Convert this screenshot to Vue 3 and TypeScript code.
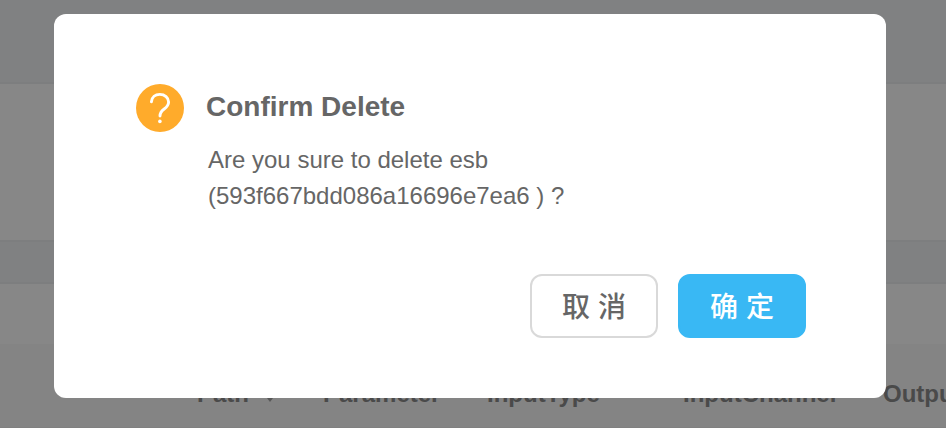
<script setup lang="ts">
interface Column {
  key: string
  label: string
  sortable?: boolean
}

const columns: Column[] = [
  { key: 'path', label: 'Path', sortable: true },
  { key: 'parameter', label: 'Parameter' },
  { key: 'input-type', label: 'InputType' },
  { key: 'input-channel', label: 'InputChannel' },
  { key: 'output', label: 'Output' },
]

const recordId = '593f667bdd086a16696e7ea6'
</script>

<template>
  <div class="screen">
    <main class="page">
      <div class="band band-top"></div>
      <div class="panel"></div>
      <div class="band band-gap"></div>
      <div class="toolbar"></div>
      <div class="table-wrap">
        <table class="table">
          <thead>
            <tr>
              <th v-for="column in columns" :key="column.key" :class="column.key">
                {{ column.label }}
                <svg v-if="column.sortable" class="caret" viewBox="0 0 12 8" aria-hidden="true">
                  <path d="M0 0h12L6 8z" />
                </svg>
              </th>
            </tr>
          </thead>
        </table>
      </div>
    </main>

    <div class="mask">
      <section class="dialog" role="dialog" aria-modal="true" aria-labelledby="dialog-title">
        <div class="body">
          <svg class="icon" viewBox="0 0 48 48" aria-hidden="true">
            <circle cx="24" cy="24" r="24" fill="#ffab2b" />
            <path
              d="M15.4 17.8C15.8 13.2 19.2 10.4 23.8 10.4C28.8 10.4 32.6 13.6 32.6 18C32.6 21.2 31 22.9 28.2 25C25.2 27.2 24 28.6 24 32"
              fill="none"
              stroke="#fff"
              stroke-width="2.9"
              stroke-linecap="round"
              stroke-linejoin="round"
            />
            <circle cx="23.9" cy="37.4" r="1.8" fill="#fff" />
          </svg>
          <div class="text">
            <h1 id="dialog-title" class="title">Confirm Delete</h1>
            <p class="message">Are you sure to delete esb<br />({{ recordId }} ) ?</p>
          </div>
        </div>
        <footer class="actions">
          <button type="button" class="button">取 消</button>
          <button type="button" class="button primary">确 定</button>
        </footer>
      </section>
    </div>
  </div>
</template>

<style>
body {
  margin: 0;
}
</style>

<style scoped>
.screen {
  position: relative;
  min-height: 100vh;
  overflow: hidden;
  font-family: "Liberation Sans", "Noto Sans CJK SC", sans-serif;
  color: #666;
  background: #fff;
}

.band {
  box-sizing: border-box;
  background: #edf0f3;
  border-bottom: 2px solid #e5e8eb;
}

.band-top {
  height: 84px;
}

.panel {
  height: 156px;
}

.band-gap {
  height: 44px;
  border-top: 2px solid #e5e8eb;
}

.toolbar {
  height: 60px;
}

.table-wrap {
  overflow: hidden;
  padding-left: 197px;
  background: #f7f7f7;
  border-bottom: 1px solid #eee;
}

.table {
  width: 1040px;
  table-layout: fixed;
  border-collapse: collapse;
}

.table th {
  height: 83px;
  padding: 16px 0 0;
  box-sizing: border-box;
  font-size: 24px;
  line-height: 32px;
  text-align: left;
  white-space: nowrap;
}

.path {
  width: 126px;
}

.parameter {
  width: 164px;
}

.input-type {
  width: 196px;
}

.input-channel {
  width: 200px;
}

.caret {
  width: 12px;
  height: 8px;
  margin-left: 8px;
  fill: #888;
}

.mask {
  position: absolute;
  inset: 0;
  display: flex;
  align-items: flex-start;
  padding: 14px 60px 30px 54px;
  background: rgba(55, 55, 55, 0.6);
}

.dialog {
  flex: 1;
  box-sizing: border-box;
  padding: 70px 80px 60px 82px;
  border-radius: 12px;
  background: #fff;
}

.body {
  display: flex;
  gap: 22px;
}

.icon {
  flex: none;
  width: 48px;
  height: 48px;
}

.title {
  margin: 0;
  font-size: 28px;
  line-height: 46px;
}

.message {
  margin: 12px 0 0 2px;
  font-size: 24px;
  line-height: 36px;
}

.actions {
  display: flex;
  justify-content: flex-end;
  gap: 20px;
  margin-top: 60px;
}

.button {
  box-sizing: border-box;
  width: 128px;
  height: 64px;
  padding: 4px 0 0;
  border: 2px solid #d9d9d9;
  border-radius: 12px;
  background: #fff;
  color: #666;
  font-family: inherit;
  font-size: 28px;
  font-weight: 500;
  line-height: 40px;
  cursor: pointer;
}

.primary {
  border-color: #39b8f4;
  background: #39b8f4;
  color: #fff;
}
</style>
